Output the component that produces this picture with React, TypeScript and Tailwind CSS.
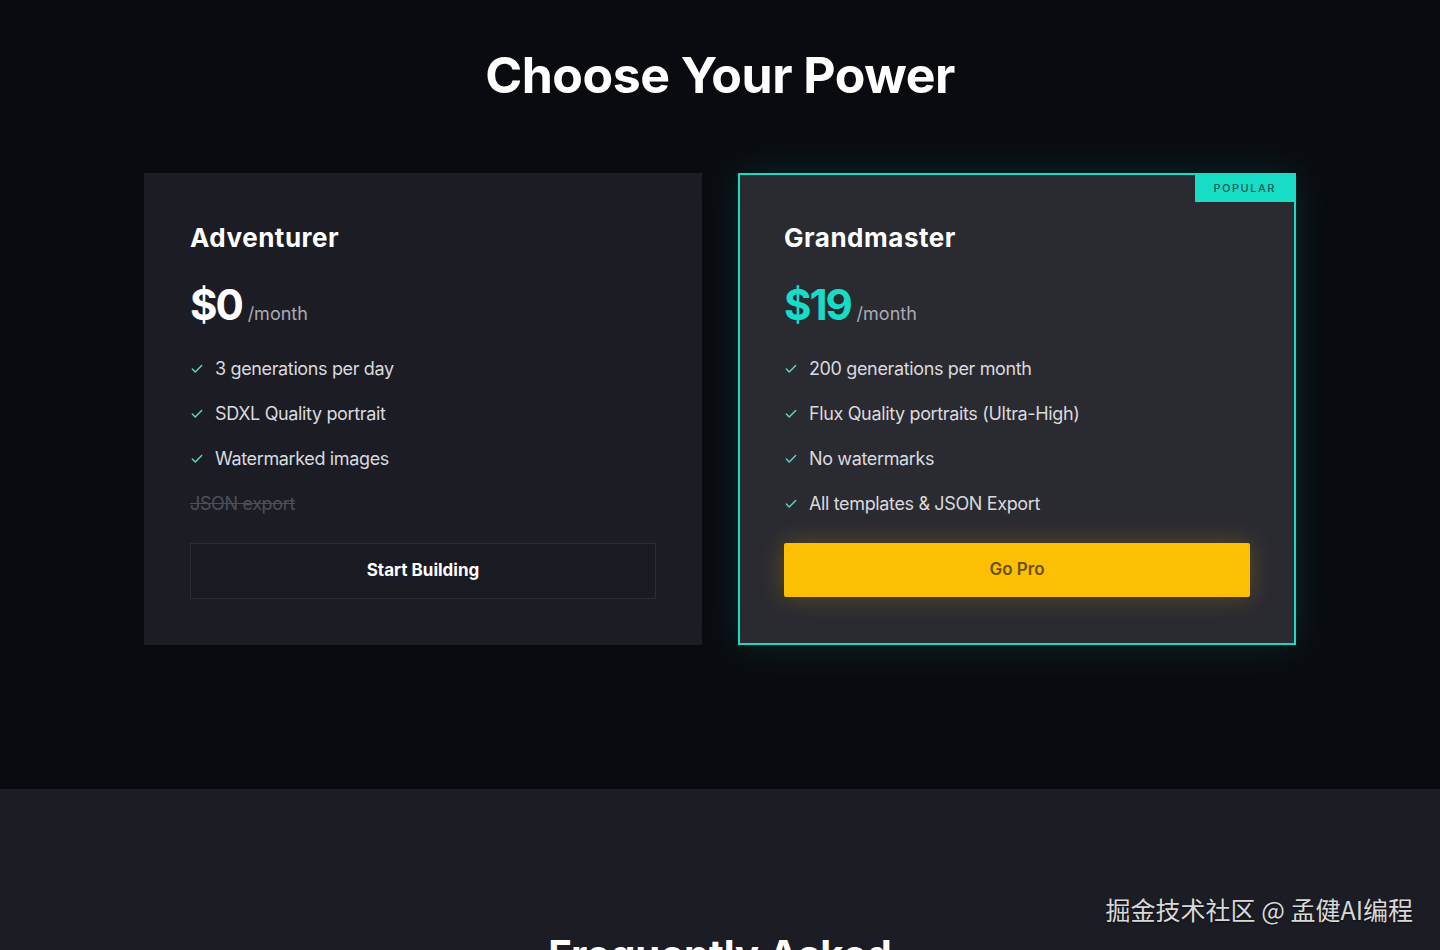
import { Check } from "lucide-react"

interface Plan {
  name: string
  price: string
  features: string[]
  disabled?: string[]
  cta: string
  popular?: boolean
}

const plans: Plan[] = [
  {
    name: "Adventurer",
    price: "$0",
    features: ["3 generations per day", "SDXL Quality portrait", "Watermarked images"],
    disabled: ["JSON export"],
    cta: "Start Building",
  },
  {
    name: "Grandmaster",
    price: "$19",
    features: [
      "200 generations per month",
      "Flux Quality portraits (Ultra-High)",
      "No watermarks",
      "All templates & JSON Export",
    ],
    cta: "Go Pro",
    popular: true,
  },
]

function PlanCard({ plan }: { plan: Plan }) {
  return (
    <div
      className={
        plan.popular
          ? "relative border-2 border-[#17dcc6] bg-[#2a2a31] p-11 shadow-[0_0_36px_rgba(23,220,198,0.14)]"
          : "relative border-2 border-transparent bg-[#1c1d24] p-11"
      }
    >
      {plan.popular && (
        <div className="absolute right-0 top-0 bg-[#17dcc6] px-[18px] py-[7px] text-[11px] font-medium leading-[13px] tracking-[0.14em] text-[#0b5f56]">
          POPULAR
        </div>
      )}
      <h3 className="pt-[3px] text-[26px] font-bold leading-[32px] tracking-[0.02em] text-white">
        {plan.name}
      </h3>
      <div className="mt-[29px] flex items-baseline gap-[6px]">
        <span
          className={
            plan.popular
              ? "text-[42px] font-bold leading-[44px] tracking-[-0.05em] text-[#17dcc6]"
              : "text-[42px] font-bold leading-[44px] tracking-[-0.05em] text-white"
          }
        >
          {plan.price}
        </span>
        <span className="text-[18px] text-[#a9abb3]">/month</span>
      </div>
      <ul className="mt-[19px] flex flex-col">
        {plan.features.map((f) => (
          <li key={f} className="flex h-[45px] items-center gap-[11px] text-[18px] tracking-[-0.02em] text-[#d9dadf]">
            <Check className="h-[14px] w-[14px] text-[#5fd6c2]" strokeWidth={2.5} />
            <span>{f}</span>
          </li>
        ))}
        {plan.disabled?.map((f) => (
          <li key={f} className="flex h-[45px] items-center text-[18px] tracking-[-0.02em] text-[#4d4f58] line-through">
            {f}
          </li>
        ))}
      </ul>
      <button
        className={
          plan.popular
            ? "mt-[17px] h-[54px] w-full rounded-[2px] bg-[#fdbf03] text-[17px] font-semibold text-[#6b5203] shadow-[0_0_24px_rgba(253,191,3,0.25)]"
            : "mt-[17px] h-[56px] w-full border border-[#2b2c35] bg-[#1a1b22] text-[17px] font-bold text-white"
        }
      >
        {plan.cta}
      </button>
    </div>
  )
}

export default function App() {
  return (
    <div className="min-h-screen bg-[#0a0b10] font-['Inter',sans-serif]">
      <section className="px-6 pb-[144px] pt-[46px]">
        <h2 className="text-center text-[50px] font-bold leading-[58px] tracking-[-0.01em] text-white">
          Choose Your Power
        </h2>
        <div className="mx-auto mt-[69px] grid max-w-[1152px] grid-cols-2 gap-9">
          {plans.map((p) => (
            <PlanCard key={p.name} plan={p} />
          ))}
        </div>
      </section>
      <section className="relative h-[400px] bg-[#1c1d24] pt-[142px]">
        <div className="absolute right-[27px] top-[102px] font-['Noto_Sans_CJK_SC',sans-serif] text-[25px] text-[#d8d8d8] [text-shadow:0_1px_2px_rgba(0,0,0,0.6)]">
          掘金技术社区 @ 孟健AI编程
        </div>
        <h2 className="text-center text-[40px] font-bold leading-[48px] text-white">
          Frequently Asked
        </h2>
      </section>
    </div>
  )
}
